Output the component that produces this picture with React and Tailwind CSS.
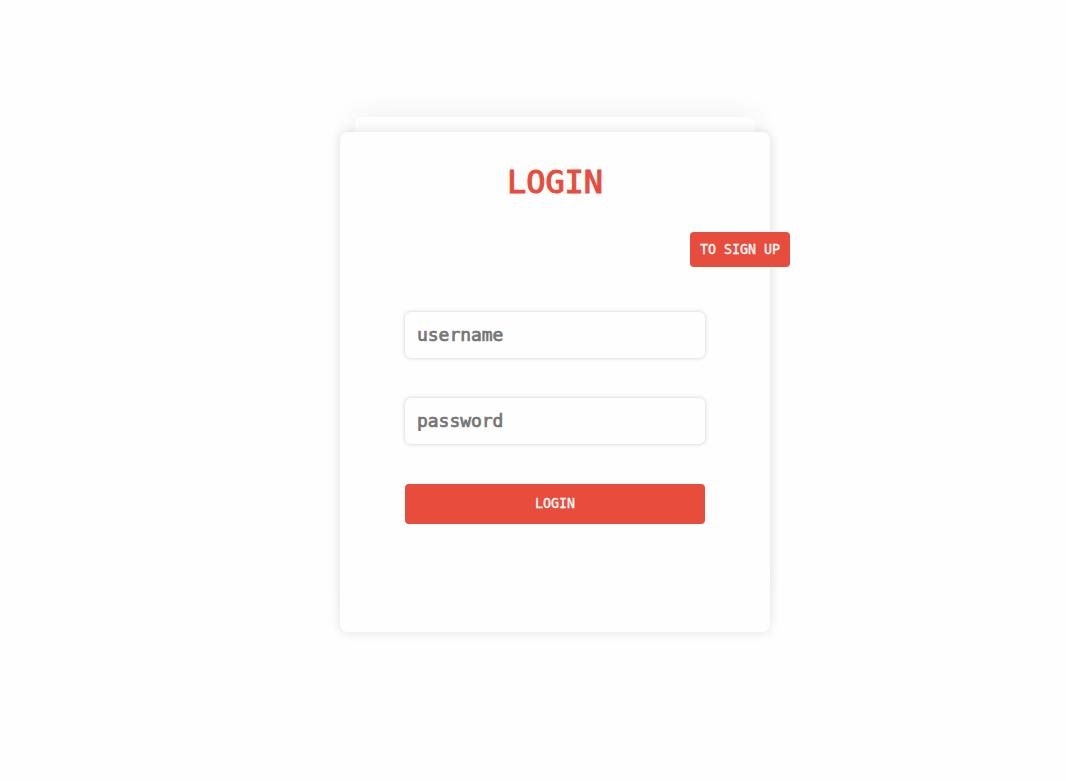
function Field({ type, placeholder, className }) {
  return (
    <input
      type={type}
      placeholder={placeholder}
      className={`block h-[46px] w-[300px] rounded-md bg-[#fefefe] px-3 pb-px text-[18px] tracking-[-0.037px] shadow-[0_0_4px_rgba(0,0,0,0.2)] outline-none placeholder:text-[#757575] placeholder:opacity-100 [-webkit-text-stroke:0.7px_#757575] ${className}`}
    />
  );
}

export default function App() {
  return (
    <main className="h-[781px] overflow-hidden bg-[#fefefe] pl-[340px] pt-[132px] font-['DejaVu_Sans_Mono',monospace]">
      <section className="relative h-[500px] w-[430px]">
        <div className="absolute -top-[15px] left-[15px] h-[480px] w-[400px] rounded-lg bg-[#fefefe] shadow-[0_0_30px_rgba(0,0,0,0.07)]" />
        <div className="relative flex h-full flex-col items-center rounded-lg bg-[#fefefe] pt-[29px] shadow-[0_0_12px_rgba(0,0,0,0.12)]">
          <h1 className="h-[42px] text-[32px] leading-[42px] tracking-[-0.066px] text-[#e84c3d] [-webkit-text-stroke:1.1px_#e84c3d]">
            LOGIN
          </h1>
          <form className="mt-[109px] flex flex-col" onSubmit={(e) => e.preventDefault()}>
            <Field type="text" placeholder="username" className="" />
            <Field type="password" placeholder="password" className="mt-10" />
            <button className="mt-10 h-10 w-[300px] rounded bg-[#e84c3d] pb-px text-[13.333px] leading-[18px] tracking-[-0.027px] text-white [-webkit-text-stroke:0.3px_white]">
              LOGIN
            </button>
          </form>
        </div>
        <button className="absolute -right-5 top-[100px] h-[35px] w-[100px] rounded bg-[#e84c3d] text-[13.333px] leading-[18px] tracking-[-0.027px] whitespace-nowrap text-white [-webkit-text-stroke:0.3px_white]">
          TO SIGN UP
        </button>
      </section>
    </main>
  );
}
